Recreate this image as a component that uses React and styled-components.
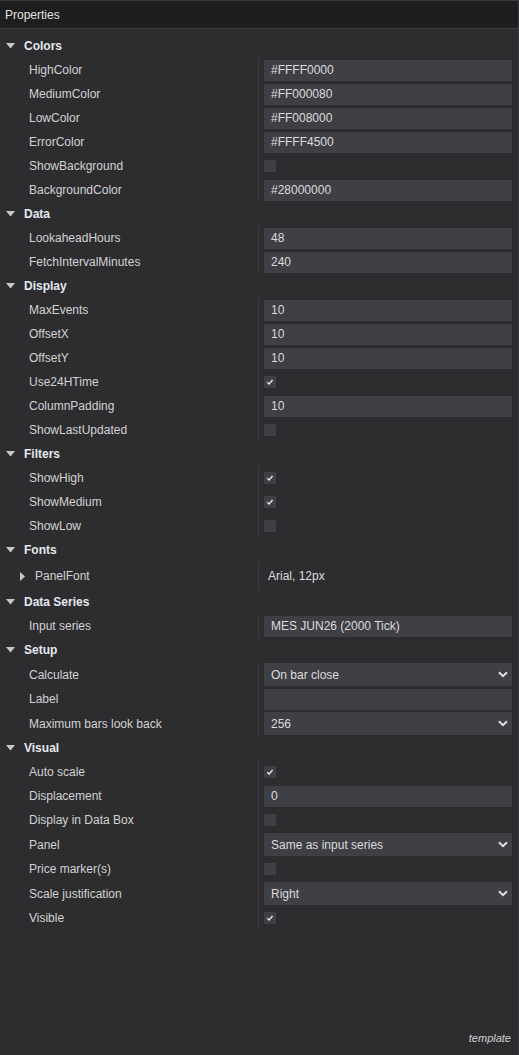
import React from "react";
import styled, { createGlobalStyle } from "styled-components";

const GlobalStyle = createGlobalStyle`
  html, body {
    margin: 0;
    padding: 0;
    background: #2d2d30;
  }
  * {
    box-sizing: border-box;
  }
`;

const sections = [
  {
    title: "Colors",
    rows: [
      { label: "HighColor", type: "text", value: "#FFFF0000" },
      { label: "MediumColor", type: "text", value: "#FF000080" },
      { label: "LowColor", type: "text", value: "#FF008000" },
      { label: "ErrorColor", type: "text", value: "#FFFF4500" },
      { label: "ShowBackground", type: "check", value: false },
      { label: "BackgroundColor", type: "text", value: "#28000000" },
    ],
  },
  {
    title: "Data",
    rows: [
      { label: "LookaheadHours", type: "text", value: "48" },
      { label: "FetchIntervalMinutes", type: "text", value: "240" },
    ],
  },
  {
    title: "Display",
    rows: [
      { label: "MaxEvents", type: "text", value: "10" },
      { label: "OffsetX", type: "text", value: "10" },
      { label: "OffsetY", type: "text", value: "10" },
      { label: "Use24HTime", type: "check", value: true },
      { label: "ColumnPadding", type: "text", value: "10" },
      { label: "ShowLastUpdated", type: "check", value: false },
    ],
  },
  {
    title: "Filters",
    rows: [
      { label: "ShowHigh", type: "check", value: true },
      { label: "ShowMedium", type: "check", value: true },
      { label: "ShowLow", type: "check", value: false },
    ],
  },
  {
    title: "Fonts",
    rows: [{ label: "PanelFont", type: "expand", value: "Arial, 12px" }],
  },
  {
    title: "Data Series",
    rows: [{ label: "Input series", type: "text", value: "MES JUN26 (2000 Tick)" }],
  },
  {
    title: "Setup",
    rows: [
      { label: "Calculate", type: "select", value: "On bar close" },
      { label: "Label", type: "text", value: "" },
      { label: "Maximum bars look back", type: "select", value: "256" },
    ],
  },
  {
    title: "Visual",
    rows: [
      { label: "Auto scale", type: "check", value: true },
      { label: "Displacement", type: "text", value: "0" },
      { label: "Display in Data Box", type: "check", value: false },
      { label: "Panel", type: "select", value: "Same as input series" },
      { label: "Price marker(s)", type: "check", value: false },
      { label: "Scale justification", type: "select", value: "Right" },
      { label: "Visible", type: "check", value: true },
    ],
  },
];

function DownTriangle() {
  return (
    <svg width="9" height="6" viewBox="0 0 9 6">
      <path d="M0 0 L9 0 L4.5 5.5 Z" fill="#c8c8c8" />
    </svg>
  );
}

function RightTriangle() {
  return (
    <svg width="5" height="9" viewBox="0 0 5 9">
      <path d="M0 0 L5 4.5 L0 9 Z" fill="#c8c8c8" />
    </svg>
  );
}

function CheckMark() {
  return (
    <svg width="12" height="12" viewBox="0 0 12 12">
      <path
        d="M3.3 6.3 L5.1 8 L8.6 4"
        fill="none"
        stroke="#e6e6e6"
        strokeWidth="1.4"
      />
    </svg>
  );
}

function Chevron() {
  return (
    <svg width="10" height="7" viewBox="0 0 10 7">
      <path
        d="M1 1.2 L5 5.2 L9 1.2"
        fill="none"
        stroke="#e0e0e0"
        strokeWidth="2"
      />
    </svg>
  );
}

function Value({ row }) {
  if (row.type === "check") {
    return <CheckBox>{row.value ? <CheckMark /> : null}</CheckBox>;
  }
  if (row.type === "select") {
    return (
      <SelectBox>
        <span>{row.value}</span>
        <Chevron />
      </SelectBox>
    );
  }
  if (row.type === "expand") {
    return <PlainValue>{row.value}</PlainValue>;
  }
  return <TextBox>{row.value}</TextBox>;
}

export default function App() {
  return (
    <>
      <GlobalStyle />
      <Panel>
        <Header>Properties</Header>
        <Body>
          {sections.map((section) => (
            <Section key={section.title}>
              <SectionHeader>
                <DownTriangle />
                <SectionTitle>{section.title}</SectionTitle>
              </SectionHeader>
              {section.rows.map((row) => (
                <Row key={row.label} kind={row.type}>
                  <Label expand={row.type === "expand"}>
                    {row.type === "expand" && <RightTriangle />}
                    <span>{row.label}</span>
                  </Label>
                  <ValueCell>
                    <Value row={row} />
                  </ValueCell>
                </Row>
              ))}
            </Section>
          ))}
        </Body>
        <Footer>template</Footer>
      </Panel>
    </>
  );
}

const Panel = styled.div`
  display: flex;
  flex-direction: column;
  width: 519px;
  height: 1055px;
  background: #2d2d30;
  border-right: 1px solid #3a3a3e;
  font-family: "Liberation Sans", Arial, sans-serif;
  font-size: 12px;
  color: #d4d4d4;
`;

const Header = styled.div`
  display: flex;
  align-items: center;
  height: 29px;
  padding-left: 5px;
  background: #1e1e1e;
  border-top: 1px solid #3a3a3a;
  border-bottom: 1px solid #3c3c40;
  color: #e2e2e2;
  font-size: 12px;
`;

const Body = styled.div`
  flex: 1;
  display: flex;
  flex-direction: column;
  padding-top: 5px;
`;

const Section = styled.div`
  display: flex;
  flex-direction: column;
`;

const SectionHeader = styled.div`
  display: flex;
  align-items: center;
  height: ${(p) => (p.tall ? "25px" : "24px")};
  padding-left: 6px;
  gap: 9px;
`;

const SectionTitle = styled.span`
  font-weight: 700;
  color: #e4e8ee;
`;

const Row = styled.div`
  display: grid;
  grid-template-columns: 258px 1fr;
  height: ${(p) =>
    p.kind === "select" ? "25px" : p.kind === "expand" ? "28px" : "24px"};
`;

const Label = styled.div`
  display: flex;
  align-items: center;
  gap: 10px;
  padding-left: ${(p) => (p.expand ? "20px" : "29px")};
  color: #d2d2d2;
  white-space: nowrap;
`;

const ValueCell = styled.div`
  display: flex;
  align-items: center;
  border-left: 1px solid #3c3c40;
  padding-left: 5px;
  padding-right: 6px;
`;

const TextBox = styled.div`
  display: flex;
  align-items: center;
  width: 100%;
  height: 21px;
  padding-left: 7px;
  background: #3f3f46;
  color: #dcdcdc;
`;

const SelectBox = styled.div`
  display: flex;
  align-items: center;
  justify-content: space-between;
  width: 100%;
  height: 23px;
  padding-left: 7px;
  padding-right: 4px;
  background: #3f3f46;
  color: #dcdcdc;
`;

const CheckBox = styled.div`
  display: flex;
  align-items: center;
  justify-content: center;
  width: 12px;
  height: 12px;
  background: #3f3f46;
`;

const PlainValue = styled.span`
  padding-left: 4px;
  color: #dcdcdc;
`;

const Footer = styled.div`
  display: flex;
  justify-content: flex-end;
  align-items: center;
  height: 30px;
  padding-right: 7px;
  padding-bottom: 4px;
  font-style: italic;
  font-size: 11px;
  color: #d0d0d0;
`;
